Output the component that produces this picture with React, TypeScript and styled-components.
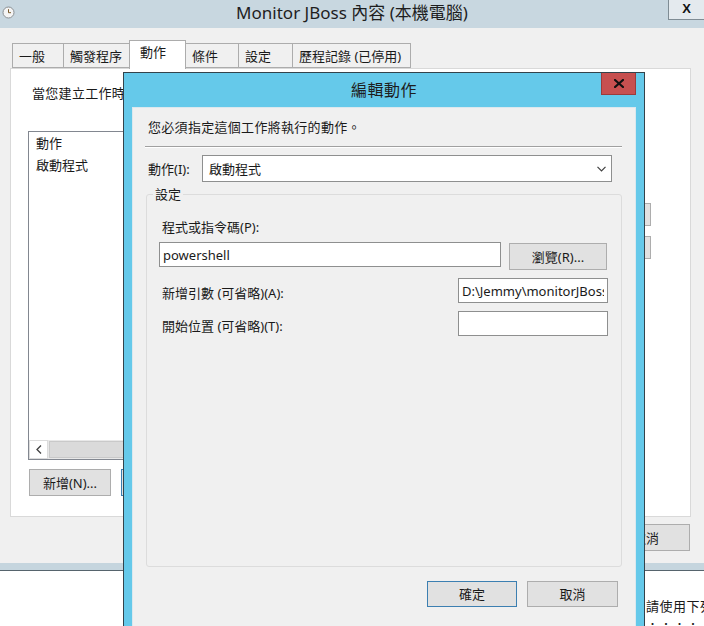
import React from "react";
import styled, { createGlobalStyle } from "styled-components";

const GlobalStyle = createGlobalStyle`
  html, body {
    margin: 0;
    padding: 0;
    background: #fff;
    overflow: hidden;
  }
  body {
    font-family: "Noto Sans", "Noto Sans CJK TC", sans-serif;
    font-size: 13px;
    color: #1a1a1a;
  }
  * {
    box-sizing: border-box;
  }
`;

const Screen = styled.div`
  position: relative;
  width: 704px;
  height: 626px;
  overflow: hidden;
  background: #fff;
`;

/* ---------- back window ---------- */

const BackWindow = styled.div`
  display: flex;
  flex-direction: column;
  height: 571px;
`;

const TitleBar = styled.div`
  height: 28px;
  background: #c8d7e0;
  display: grid;
  grid-template-columns: 1fr auto 1fr;
  align-items: start;
`;

const TitleIcon = styled.div`
  padding: 6px 0 0 2px;
  line-height: 0;
`;

const TitleText = styled.div`
  font-size: 17px;
  line-height: 26px;
  color: #1e1e1e;
`;

const TitleClose = styled.div`
  justify-self: end;
  width: 36px;
  height: 20px;
  background: #e4eaee;
  border-left: 1px solid #7f8c94;
  border-bottom: 1px solid #7f8c94;
  font-family: "Liberation Sans", sans-serif;
  font-weight: bold;
  font-size: 13px;
  line-height: 18px;
  text-align: center;
  color: #111;
`;

const WindowBody = styled.div`
  flex: 1;
  background: #f0f0f0;
  padding: 12px 13px 0 10px;
  display: flex;
  flex-direction: column;
`;

const TabStrip = styled.div`
  display: flex;
  align-items: flex-end;
  height: 28px;
  padding-left: 2px;
`;

const Tab = styled.div<{ $w: number; $active?: boolean }>`
  width: ${(p) => p.$w}px;
  height: ${(p) => (p.$active ? 29 : 25)}px;
  margin-bottom: ${(p) => (p.$active ? -1 : 0)}px;
  margin-left: -1px;
  padding-left: ${(p) => (p.$active ? 10 : 6)}px;
  padding-top: ${(p) => (p.$active ? 2 : 3)}px;
  border: 1px solid #acacac;
  border-bottom: ${(p) => (p.$active ? "none" : "1px solid #acacac")};
  background: ${(p) => (p.$active ? "#fff" : "#f0f0f0")};
  position: relative;
  z-index: ${(p) => (p.$active ? 2 : 1)};
  line-height: 18px;
  white-space: nowrap;
  &:first-child {
    margin-left: 0;
  }
`;

const TabPanel = styled.div`
  height: 449px;
  border: 1px solid #d9d9d9;
  background: #fff;
  padding: 15px 0 0 17px;
  display: flex;
  flex-direction: column;
`;

const Intro = styled.div`
  padding-left: 4px;
  line-height: 18px;
  letter-spacing: 0.3px;
  white-space: nowrap;
`;

const ListArea = styled.div`
  display: flex;
  margin-top: 29px;
`;

const ListBox = styled.div`
  width: 592px;
  height: 329px;
  border: 1px solid #828790;
  display: flex;
  flex-direction: column;
`;

const ListHeader = styled.div`
  height: 22px;
  line-height: 22px;
  padding-left: 7px;
`;

const ListItem = styled.div`
  height: 22px;
  line-height: 22px;
  padding-left: 7px;
`;

const ListFill = styled.div`
  flex: 1;
`;

const HScroll = styled.div`
  height: 19px;
  display: flex;
  background: #e8e8e8;
`;

const ScrollArrow = styled.div`
  width: 19px;
  background: #fff;
  border: 1px solid #dcdcdc;
  display: flex;
  align-items: center;
  justify-content: center;
`;

const ScrollThumb = styled.div`
  flex: 1;
  margin: 1px;
  background: #dadada;
  border: 1px solid #c9c9c9;
`;

const SideButtons = styled.div`
  display: flex;
  flex-direction: column;
  gap: 10px;
  margin: 72px 0 0 7px;
`;

const SideButton = styled.div`
  width: 24px;
  height: 23px;
  background: #e1e1e1;
  border: 1px solid #adadad;
`;

const ButtonRow = styled.div<{ $end?: boolean }>`
  display: flex;
  gap: ${(p) => (p.$end ? 8 : 10)}px;
  justify-content: ${(p) => (p.$end ? "flex-end" : "flex-start")};
  margin-top: ${(p) => (p.$end ? 7 : 9)}px;
  padding: ${(p) => (p.$end ? "0 1px 0 0" : "0 0 0 1px")};
`;

const Button = styled.div<{ $w: number; $h?: number; $default?: boolean }>`
  width: ${(p) => p.$w}px;
  height: ${(p) => p.$h ?? 27}px;
  background: #e1e1e1;
  border: 1px solid ${(p) => (p.$default ? "#3c7fb1" : "#adadad")};
  display: flex;
  align-items: center;
  justify-content: center;
  line-height: 18px;
  white-space: nowrap;
  flex: none;
`;

const BottomFrame = styled.div`
  height: 8px;
  background: #c5d5de;
  border-bottom: 1px solid #56646d;
`;

const LowerArea = styled.div`
  flex: 1;
  padding: 26px 0 0 646px;
  line-height: 18px;
  white-space: nowrap;
  letter-spacing: 0.5px;
`;

/* ---------- dialog ---------- */

const Dialog = styled.div`
  position: absolute;
  left: 123px;
  top: 72px;
  width: 522px;
  height: 600px;
  border: 1px solid #33434b;
  background: #65c9ea;
  padding: 0 8px;
  display: flex;
  flex-direction: column;
`;

const DialogTitleBar = styled.div`
  height: 34px;
  display: grid;
  grid-template-columns: 1fr auto 1fr;
  align-items: start;
`;

const DialogTitle = styled.div`
  font-size: 16px;
  line-height: 34px;
  color: #1e1e1e;
  letter-spacing: 0.5px;
`;

const DialogClose = styled.div`
  justify-self: end;
  width: 35px;
  height: 22px;
  background: #c75050;
  border: 1px solid #9c3b3b;
  border-top: none;
  display: flex;
  align-items: center;
  justify-content: center;
`;

const DialogContent = styled.div`
  flex: 1;
  background: #f0f0f0;
  border: 1px solid #dbe8ee;
  display: flex;
  flex-direction: column;
`;

const Instruction = styled.div`
  padding: 10px 0 0 15px;
  line-height: 18px;
  letter-spacing: 0.3px;
`;

const Separator = styled.div`
  margin: 10px 13px 0 12px;
  border-top: 1px solid #a0a0a0;
  border-bottom: 1px solid #fff;
`;

const ActionRow = styled.div`
  display: flex;
  align-items: center;
  margin-top: 7px;
  padding-left: 15px;
`;

const FieldLabel = styled.div<{ $w?: number }>`
  width: ${(p) => (p.$w ? `${p.$w}px` : "auto")};
  line-height: 18px;
  white-space: nowrap;
`;

const Combo = styled.div`
  width: 410px;
  height: 27px;
  background: #fff;
  border: 1px solid #8e8f8f;
  display: flex;
  align-items: center;
  justify-content: space-between;
  padding: 0 5px 0 6px;
`;

const GroupBox = styled.fieldset`
  margin: 3px 13px 0 13px;
  height: 382px;
  border: 1px solid #dcdcdc;
  border-radius: 3px;
  padding: 15px 12px 0 12px;
  min-width: 0;
`;

const GroupLegend = styled.legend`
  margin-left: -6px;
  padding: 0 2px;
  line-height: 18px;
`;

const Indented = styled.div`
  padding-left: 3px;
`;

const PathRow = styled.div`
  display: flex;
  align-items: flex-start;
  margin-top: 6px;
`;

const TextBox = styled.input<{ $w: number }>`
  width: ${(p) => p.$w}px;
  height: 25px;
  border: 1px solid #8e8f8f;
  background: #fff;
  padding: 0 3px;
  margin: 0;
  font-family: "Noto Sans", "Noto Sans CJK TC", sans-serif;
  font-size: 13px;
  color: #1a1a1a;
  outline: none;
`;

const BrowseButton = styled(Button)`
  margin: 1px 0 0 8px;
`;

const OptionGrid = styled.div`
  display: grid;
  grid-template-columns: 299px 150px;
  row-gap: 8px;
  align-items: center;
  margin-top: 8px;
`;

const OptionLabel = styled.div`
  padding: 4px 0 0 3px;
  line-height: 18px;
  white-space: nowrap;
`;

const DialogButtons = styled.div`
  display: flex;
  justify-content: flex-end;
  gap: 10px;
  margin-top: 14px;
  padding-right: 17px;
`;

const ClockIcon = () => (
  <svg width="13" height="13" viewBox="0 0 13 13">
    <circle cx="6.5" cy="6.5" r="5.5" fill="#f4f4f4" stroke="#8a8f93" strokeWidth="1" />
    <path d="M6.5 3.2 V6.7 H9" fill="none" stroke="#7a5a2a" strokeWidth="1" />
  </svg>
);

const Chevron = ({ dir }: { dir: "down" | "left" }) =>
  dir === "down" ? (
    <svg width="9" height="6" viewBox="0 0 9 6">
      <polyline points="0.5,0.8 4.5,4.8 8.5,0.8" fill="none" stroke="#404040" strokeWidth="1.2" />
    </svg>
  ) : (
    <svg width="6" height="9" viewBox="0 0 6 9">
      <polyline points="5,0.5 1,4.5 5,8.5" fill="none" stroke="#404040" strokeWidth="1.3" />
    </svg>
  );

const CloseGlyph = () => (
  <svg width="10" height="9" viewBox="0 0 10 9">
    <path d="M1 1 L9 8 M9 1 L1 8" stroke="#111" strokeWidth="2.2" strokeLinecap="square" />
  </svg>
);

const tabs = [
  { label: "一般", w: 52 },
  { label: "觸發程序", w: 67 },
  { label: "動作", w: 57, active: true },
  { label: "條件", w: 54 },
  { label: "設定", w: 55 },
  { label: "歷程記錄 (已停用)", w: 119 },
];

const App: React.FC = () => {
  return (
    <Screen>
      <GlobalStyle />
      <BackWindow>
        <TitleBar>
          <TitleIcon>
            <ClockIcon />
          </TitleIcon>
          <TitleText>Monitor JBoss 內容 (本機電腦)</TitleText>
          <TitleClose>X</TitleClose>
        </TitleBar>
        <WindowBody>
          <TabStrip>
            {tabs.map((t) => (
              <Tab key={t.label} $w={t.w} $active={t.active}>
                {t.label}
              </Tab>
            ))}
          </TabStrip>
          <TabPanel>
            <Intro>當您建立工作時，您必須指定工作開始時將會發生的動作。</Intro>
            <ListArea>
              <ListBox>
                <ListHeader>動作</ListHeader>
                <ListItem>啟動程式</ListItem>
                <ListFill />
                <HScroll>
                  <ScrollArrow>
                    <Chevron dir="left" />
                  </ScrollArrow>
                  <ScrollThumb />
                </HScroll>
              </ListBox>
              <SideButtons>
                <SideButton />
                <SideButton />
              </SideButtons>
            </ListArea>
            <ButtonRow>
              <Button $w={82}>新增(N)...</Button>
              <Button $w={82} $default>
                編輯(E)...
              </Button>
              <Button $w={82}>刪除(D)</Button>
            </ButtonRow>
          </TabPanel>
          <ButtonRow $end>
            <Button $w={88}>確定</Button>
            <Button $w={88}>取消</Button>
          </ButtonRow>
        </WindowBody>
        <BottomFrame />
      </BackWindow>
      <LowerArea>
        <div>請使用下列其中一個選項</div>
        <div>．．．．．．．．</div>
      </LowerArea>

      <Dialog>
        <DialogTitleBar>
          <div />
          <DialogTitle>編輯動作</DialogTitle>
          <DialogClose>
            <CloseGlyph />
          </DialogClose>
        </DialogTitleBar>
        <DialogContent>
          <Instruction>您必須指定這個工作將執行的動作。</Instruction>
          <Separator />
          <ActionRow>
            <FieldLabel $w={54}>動作(I):</FieldLabel>
            <Combo>
              <span>啟動程式</span>
              <Chevron dir="down" />
            </Combo>
          </ActionRow>
          <GroupBox>
            <GroupLegend>設定</GroupLegend>
            <Indented>
              <FieldLabel>程式或指令碼(P):</FieldLabel>
            </Indented>
            <PathRow>
              <TextBox $w={342} readOnly value="powershell" />
              <BrowseButton $w={98}>瀏覽(R)...</BrowseButton>
            </PathRow>
            <OptionGrid>
              <OptionLabel>新增引數 (可省略)(A):</OptionLabel>
              <TextBox $w={150} readOnly value="D:\Jemmy\monitorJBoss.ps1" />
              <OptionLabel>開始位置 (可省略)(T):</OptionLabel>
              <TextBox $w={150} readOnly value="" />
            </OptionGrid>
          </GroupBox>
          <DialogButtons>
            <Button $w={90} $h={26} $default>
              確定
            </Button>
            <Button $w={91} $h={26}>
              取消
            </Button>
          </DialogButtons>
        </DialogContent>
      </Dialog>
    </Screen>
  );
};

export default App;
